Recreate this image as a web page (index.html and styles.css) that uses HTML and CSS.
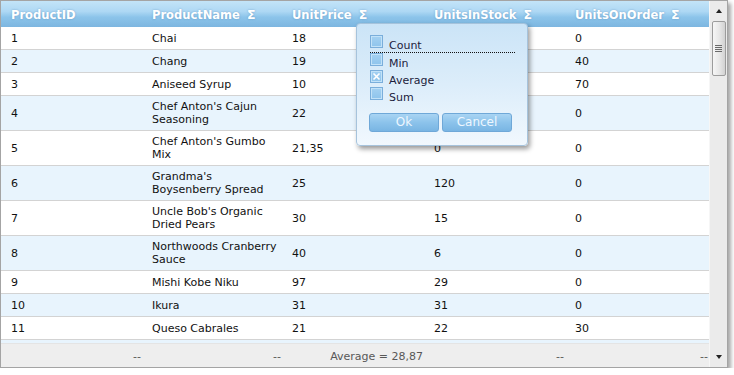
FILE: index.html
```html
<!DOCTYPE html>
<html>
<head>
<meta charset="utf-8">
<link rel="stylesheet" href="styles.css">
</head>
<body>
<div class="grid">
  <div class="main">
    <div class="row head">
      <div class="hc">ProductID</div>
      <div class="hc">ProductName <span class="sig">Σ</span></div>
      <div class="hc">UnitPrice <span class="sig">Σ</span></div>
      <div class="hc">UnitsInStock <span class="sig">Σ</span></div>
      <div class="hc">UnitsOnOrder <span class="sig">Σ</span></div>
    </div>
    <div class="body">
      <div class="row"><div class="c">1</div><div class="c n">Chai</div><div class="c">18</div><div class="c">39</div><div class="c">0</div></div>
      <div class="row alt"><div class="c">2</div><div class="c n">Chang</div><div class="c">19</div><div class="c">17</div><div class="c">40</div></div>
      <div class="row"><div class="c">3</div><div class="c n">Aniseed Syrup</div><div class="c">10</div><div class="c">13</div><div class="c">70</div></div>
      <div class="row alt"><div class="c">4</div><div class="c n">Chef Anton's Cajun Seasoning</div><div class="c">22</div><div class="c">53</div><div class="c">0</div></div>
      <div class="row"><div class="c">5</div><div class="c n">Chef Anton's Gumbo Mix</div><div class="c">21,35</div><div class="c">0</div><div class="c">0</div></div>
      <div class="row alt"><div class="c">6</div><div class="c n">Grandma's Boysenberry Spread</div><div class="c">25</div><div class="c">120</div><div class="c">0</div></div>
      <div class="row"><div class="c">7</div><div class="c n">Uncle Bob's Organic Dried Pears</div><div class="c">30</div><div class="c">15</div><div class="c">0</div></div>
      <div class="row alt"><div class="c">8</div><div class="c n">Northwoods Cranberry Sauce</div><div class="c">40</div><div class="c">6</div><div class="c">0</div></div>
      <div class="row"><div class="c">9</div><div class="c n">Mishi Kobe Niku</div><div class="c">97</div><div class="c">29</div><div class="c">0</div></div>
      <div class="row alt"><div class="c">10</div><div class="c n">Ikura</div><div class="c">31</div><div class="c">31</div><div class="c">0</div></div>
      <div class="row"><div class="c">11</div><div class="c n">Queso Cabrales</div><div class="c">21</div><div class="c">22</div><div class="c">30</div></div>
      <div class="row alt peek"></div>
    </div>
    <div class="foot">
      <span class="fc">--</span>
      <span class="fc">--</span>
      <span class="fc">Average = 28,87</span>
      <span class="fc">--</span>
      <span class="fc">--</span>
    </div>
  </div>
  <div class="scroll">
    <div class="arrow up"></div>
    <div class="thumb"><div class="grip"></div></div>
    <div class="track"></div>
    <div class="arrow down"></div>
  </div>

  <div class="popup">
    <div class="opts">
      <div class="opt first"><span class="cb"></span><span class="lbl">Count</span></div>
      <div class="opt"><span class="cb"></span><span class="lbl">Min</span></div>
      <div class="opt"><span class="cb checked">
        <svg width="11" height="11" viewBox="0 0 11 11"><path d="M2.5 2.5 L8.5 8.5 M8.5 2.5 L2.5 8.5" stroke="#ffffff" stroke-width="1.6" fill="none"/></svg>
      </span><span class="lbl">Average</span></div>
      <div class="opt"><span class="cb"></span><span class="lbl">Sum</span></div>
    </div>
    <div class="btns">
      <div class="btn">Ok</div>
      <div class="btn">Cancel</div>
    </div>
  </div>
</div>
</body>
</html>
```
FILE: styles.css
```css
html, body {
  margin: 0;
  padding: 0;
  background: #ffffff;
}
body {
  font-family: "DejaVu Sans", Verdana, sans-serif;
  font-size: 11px;
  color: #111;
}
.grid {
  position: relative;
  width: 726px;
  height: 366px;
  border: 1px solid #a4a4a4;
  box-shadow: 3px 3px 4px rgba(0,0,0,0.35);
  display: flex;
}
.main {
  width: 709px;
  display: flex;
  flex-direction: column;
}
.row {
  display: grid;
  grid-template-columns: 141px 140px 142px 141px 1fr;
  min-height: 22px;
  border-bottom: 1px solid #d3d3d3;
  background: #ffffff;
}
.row.alt {
  background: #e8f4fd;
}
.row.peek {
  min-height: 0;
  height: 22px;
  border-bottom: none;
}
.head {
  flex: 0 0 26px;
  height: 26px;
  min-height: 26px;
  border-bottom: none;
  background: linear-gradient(to bottom, #c3e4f8 0%, #aed8f4 40%, #8cc4ea 62%, #7db6e0 100%);
}
.hc {
  padding: 0 0 0 10px;
  color: #ffffff;
  font-weight: bold;
  font-size: 11.5px;
  line-height: 26px;
  padding-top: 1px;
  white-space: nowrap;
  text-shadow: 0 0 2px rgba(50,100,150,0.45);
}
.sig {
  margin-left: 3px;
  font-weight: bold;
  font-size: 12.5px;
}
.body {
  flex: 1 1 auto;
  min-height: 0;
  overflow: hidden;
}
.c {
  padding: 4px 10px;
  line-height: 13px;
  display: flex;
  align-items: center;
}
.c.n {
  padding-right: 3px;
}
.foot {
  flex: 0 0 24px;
  box-sizing: border-box;
  height: 24px;
  display: grid;
  grid-template-columns: 141px 140px 142px 141px 1fr;
  align-items: center;
  background: #eeeeee;
  border-top: 1px solid #e4e4e4;
}
.fc {
  justify-self: end;
  padding: 2px 1px 0 0;
  color: #585858;
  line-height: 14px;
  white-space: nowrap;
}
.scroll {
  width: 17px;
  background: #ebebeb;
  border-left: 1px solid #f6f6f6;
  display: flex;
  flex-direction: column;
  align-items: center;
}
.arrow {
  width: 0;
  height: 0;
  border-left: 3.5px solid transparent;
  border-right: 3.5px solid transparent;
}
.arrow.up {
  margin-top: 8px;
  border-bottom: 4px solid #222;
}
.arrow.down {
  margin-bottom: 8px;
  border-top: 4px solid #222;
}
.thumb {
  margin-top: 8px;
  width: 12px;
  height: 53px;
  border: 1px solid #9c9c9c;
  border-radius: 2px;
  background: linear-gradient(to right, #f6f6f6 0%, #e8e8e8 50%, #d2d2d2 100%);
  display: flex;
  align-items: center;
  justify-content: center;
}
.grip {
  width: 7px;
  height: 7px;
  background: repeating-linear-gradient(to bottom, #6a6a6a 0, #6a6a6a 1px, transparent 1px, transparent 2px);
}
.track {
  flex: 1;
}
.popup {
  position: absolute;
  left: 355px;
  top: 22px;
  width: 145px;
  padding: 11px 13px 13px 12px;
  border: 1px solid #a6c3dc;
  border-radius: 4px;
  background: linear-gradient(to bottom, #cbe4f7 0%, #dcedfa 50%, #f1f8fe 100%);
  box-shadow: 2px 3px 5px rgba(0,0,0,0.4);
}
.opts {
  margin-left: 1px;
  width: 145px;
}
.opt {
  height: 17px;
  display: flex;
  align-items: flex-start;
}
.opt.first {
  border-bottom: 1px dotted #111;
}
.cb {
  box-sizing: border-box;
  width: 13px;
  height: 13px;
  border: 1px solid #7aaedb;
  background: linear-gradient(to bottom, #a4d1f2 0%, #8ec4ec 100%);
  box-shadow: inset 0 0 0 1px #c2e2f8;
  display: flex;
  align-items: center;
  justify-content: center;
}
.cb svg {
  display: block;
}
.lbl {
  margin-left: 6px;
  padding-top: 4px;
  line-height: 13px;
  color: #1c1c3c;
}
.btns {
  margin-top: 9px;
  display: flex;
  gap: 3px;
}
.btn {
  box-sizing: border-box;
  width: 70px;
  height: 19px;
  border: 1px solid #6fa8d8;
  border-radius: 3px;
  background: linear-gradient(to bottom, #a9d4f3 0%, #8cc3eb 50%, #79b5e3 100%);
  color: #eef7ff;
  font-size: 12px;
  line-height: 17px;
  text-align: center;
}
```
